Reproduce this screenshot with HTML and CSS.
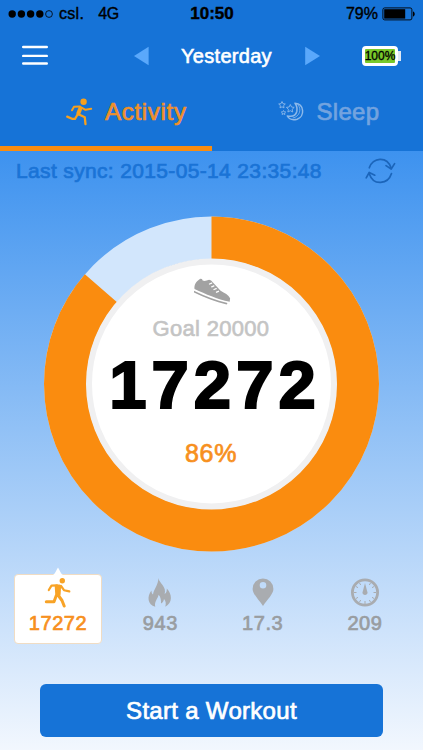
FILE: index.html
```
<!DOCTYPE html>
<html lang="en">
<head>
  <meta charset="UTF-8" />
  <meta name="viewport" content="width=device-width, initial-scale=1" />
  <title>Activity</title>
  <link rel="stylesheet" href="styles.css">
</head>
<body>

  <div class="screen">
    <header class="header">
      <div class="status-bar">
        <div class="status-left">
          <svg class="signal" width="46" height="10" viewBox="0 0 46 10">
            <circle cx="4.2" cy="5" r="3.7" />
            <circle cx="13.4" cy="5" r="3.7" />
            <circle cx="22.6" cy="5" r="3.7" />
            <circle cx="31.8" cy="5" r="3.7" />
            <circle cx="41" cy="5" r="3.4" fill="none" stroke="#000" stroke-width=".8" />
          </svg>
          <span class="carrier">csl.</span>
          <span class="network">4G</span>
        </div>
        <div class="clock">10:50</div>
        <div class="status-right">
          <span>79%</span>
          <svg width="34" height="14" viewBox="0 0 34 14">
            <rect x=".9" y=".9" width="29" height="12" rx="1.8" fill="none" stroke="#000" stroke-width=".9" />
            <rect x="2.2" y="2.2" width="21" height="9.4" />
            <path d="M31 4.5c2.3.6 2.3 4.4 0 5z" />
          </svg>
        </div>
      </div>

      <div class="nav-bar">
        <svg class="menu" width="28" height="21" viewBox="0 0 28 21" stroke="#fff" stroke-width="2.4" stroke-linecap="round">
          <path d="M2.2 2h23.6M2.2 10.900h23.600M2.200 18.500h23.600" />
        </svg>
        <div class="day-picker">
          <svg width="15" height="20" viewBox="0 0 15 20"><path d="M14.6.8v18.4L0 10z" /></svg>
          <div class="day">Yesterday</div>
          <svg width="15" height="20" viewBox="0 0 15 20"><path d="M.2.8v18.4L15 10z" /></svg>
        </div>
        <div class="band-battery">
          <div class="band-level">100%</div>
        </div>
      </div>

      <div class="tabs">
        <div class="tab active">
          <svg class="tab-icon" width="27" height="28" viewBox="0 0 27 28" fill="none" stroke="#f8a01c" stroke-linecap="round" stroke-linejoin="round">
            <circle cx="17.600" cy="3.800" r="3.200" fill="#f8a01c" stroke="none" />
            <path d="M14.500 10L12.300 15.500" stroke-width="4" />
            <path d="M14 8.500L8 8.800 6 12.300M16 9.800L19.500 11.800 25.200 10.800" stroke-width="2" />
            <path d="M13 16.500L18.800 19.300 19.500 26.200M11.300 17L9 20.800 6 20.800 1.200 18.600" stroke-width="2.300" />
          </svg>
          <span>Activity</span>
        </div>
        <div class="tab">
          <svg class="tab-icon" width="27" height="28" viewBox="0 0 27 28" fill="none" stroke="#8db9ea" stroke-linejoin="round">
            <path d="M17 5.200c9.500.5 10 13.500 2.200 16-4.500 1.200-8.300-.3-9.900-3.200 5 1 8.500-.4 9.500-4.500.6-3.300-.1-6.200-1.800-8.300z" stroke-width="1.500" />
            <path d="M19.500 6.500c4.500 4 2.500 12-4.800 13.600" stroke-width=".8" />
            <path d="M4 3.500l1 2.200 2.300.3-1.700 1.600.4 2.300-2-1.100-2 1.100.4-2.300L.7 6l2.300-.3zM12.300 6.500l1.200 2.500 2.700.4-2 1.900.5 2.700-2.400-1.300-2.400 1.300.5-2.700-2-1.900 2.700-.4zM5.500 12.500l.7 1.300 1.500.2-1.100 1 .3 1.500-1.400-.7-1.400.7.3-1.500-1.100-1 1.500-.2z" stroke-width=".9" />
          </svg>
          <span>Sleep</span>
        </div>
      </div>
    </header>

    <div class="sync">
      <div class="sync-text">Last sync: 2015-05-14 23:35:48</div>
      <svg width="31" height="28" viewBox="0 0 31 28" fill="none" stroke="#1b65ba" stroke-width="1.700" stroke-linecap="round" stroke-linejoin="round">
        <path d="M4.300 10.800C7.500.5 22 -1.500 26 10.800M26.500 16.500C23 27.500 8.500 29 4.500 17.200" />
        <path d="M21 8.600L26.200 12 29.600 6.600M1.200 20.800L4.200 15.500 9.800 18.200" />
      </svg>
    </div>

    <main class="goal">
      <svg class="ring" width="336" height="336" viewBox="0 0 336 336">
        <circle cx="168.500" cy="168" r="146.200" fill="none" stroke="#d2e6fc" stroke-width="42.600" />
        <circle cx="168.500" cy="168" r="146.200" fill="none" stroke="#fa8c0f" stroke-width="42.600" pathLength="100" stroke-dasharray="86.360 100" transform="rotate(-90 168.500 168)" />
        <circle cx="168.500" cy="168" r="122.500" fill="#fff" stroke="#f0f0f1" stroke-width="6" />
      </svg>
      <div class="goal-info">
        <svg class="shoe" width="38" height="27" viewBox="0 0 38 27" fill="#a2a2a2">
          <path d="M1.500 11C1 6 3.500 3.500 7.300.8l1.700.2.6 1.600c2 .7 4 .2 6.500-.8l2 .8 9.500 10.200c4 2.200 8 4.300 9.500 7.400l-.4 3.500C24 21.200 13 16.200 1.500 11z" />
          <path d="M1 12.800C13 18.300 23 22.500 34.500 25l-.8 1.400C22.500 24 12 19.600 1 14.500z" />
          <path d="M16.500 6l2.200-.9M18.700 8.800l2.200-.9M21 11.500l2.200-.9M23.500 14.200l2-.9" fill="none" stroke="#fff" stroke-width="1.300" stroke-linecap="round" />
        </svg>
        <div class="goal-label">Goal 20000</div>
        <div class="steps">17272</div>
        <div class="percent">86%</div>
      </div>
    </main>

    <div class="stats">
      <div class="stat selected">
        <svg class="pointer" width="12" height="9" viewBox="0 0 12 9">
          <path d="M0 8.500C3 8 4.500 2.500 6 .5 7.500 2.500 9 8 12 8.500V9H0z" fill="#fff" />
        </svg>
        <svg width="28" height="32" viewBox="0 0 28 32" fill="none" stroke="#f8a326" stroke-linecap="round" stroke-linejoin="round">
          <circle cx="18.300" cy="3.700" r="2.700" fill="#f8a326" stroke="none" />
          <path d="M12.300 9.200L15.500 9.200 15 17.500 12.800 17z" fill="#f8a326" stroke-width="3.200" />
          <path d="M13 8.300L7.500 8.600 4.800 13M17 9L20 13.200 25.300 14.400" stroke-width="2.200" />
          <path d="M14 18L18 23.500 20.200 29M12.300 18.500L10 24.800H2.300" stroke-width="3" />
        </svg>
        <div class="value">17272</div>
      </div>
      <div class="stat">
        <svg width="28" height="32" viewBox="0 0 28 32" fill="#a9acb0">
          <path d="M12.300 1C13 5 17.500 7.500 18.800 12.500c.3 1.500.3 3-.2 4.500 2-1 2.300-3.500 2.200-5.500 5.500 6 6 14-1.500 18.300 1-3.300.4-5.800-1.300-7.700-.4 2.500-1.200 3.500-3 4.500.2-3.700-.3-6.500-2.400-8.800-.5 3.500-4.700 7-3.300 12C1.500 27.500.7 19.500 5.500 13.500c0 2 .3 3 1.500 4C7.500 12.500 12.500 8 12.300 1z" />
        </svg>
        <div class="value">943</div>
      </div>
      <div class="stat">
        <svg width="28" height="32" viewBox="0 0 28 32" fill="#a9acb0">
          <path fill-rule="evenodd" d="M14 1.500A10.400 10.400 0 0 1 24.400 12c0 5-6 10.500-10.400 17C9.600 22.500 3.600 17 3.600 12A10.400 10.400 0 0 1 14 1.500zm0 3.500a3.300 3.300 0 1 0 0 6.600A3.300 3.300 0 0 0 14 5z" />
        </svg>
        <div class="value">17.3</div>
      </div>
      <div class="stat">
        <svg width="28" height="32" viewBox="0 0 28 32" fill="none" stroke="#a9acb0">
          <circle cx="14" cy="15.500" r="12.600" stroke-width="2.800" />
          <path d="M14 24v3M3 15.500h2.500M22.500 15.500H25M5 9.500l2 1.200M23 9.500l-2 1.200M5 21.500l2-1.200M23 21.500l-2-1.200M8.500 25l1.200-2M19.500 25l-1.200-2M8.500 6l1.200 2M19.500 6l-1.200 2" stroke-width="1" />
          <path d="M14 6l2.500 9.500c.4 3.200-5.400 3.200-5 0z" fill="#a9acb0" stroke="none" />
        </svg>
        <div class="value">209</div>
      </div>
    </div>

    <button class="workout">Start a Workout</button>
  </div>

</body>
</html>
```
FILE: styles.css
```
body {
  margin: 0;
  font-family: "Liberation Sans", Arial, sans-serif;
  background: #eff6fe;
}
.screen {
  width: 423px;
  height: 750px;
  overflow: hidden;
  display: flex;
  flex-direction: column;
  background: linear-gradient(#3d92ef 150px, #f2f7fe 750px);
}
svg {
  display: block;
  flex-shrink: 0;
  overflow: visible;
}

/* header */
.header {
  height: 151px;
  background: #1673d7;
}
.status-bar {
  height: 28px;
  padding: 0 7px 0 8px;
  display: grid;
  grid-template-columns: 1fr auto 1fr;
  align-items: center;
  font-size: 16px;
  -webkit-text-stroke: 0.4px #000;
}
.status-left, .status-right {
  display: flex;
  align-items: center;
}
.carrier {
  margin-left: 5px;
  letter-spacing: 0.3px;
}
.network {
  margin-left: 14px;
  letter-spacing: -0.4px;
}
.clock {
  font-weight: bold;
  font-size: 17px;
}
.status-right {
  justify-content: flex-end;
  gap: 4px;
}
.nav-bar {
  height: 55px;
  padding: 0 21px;
  display: flex;
  align-items: center;
}
.day-picker {
  display: flex;
  align-items: center;
  gap: 32px;
  margin-left: 85px;
}
.day-picker svg {
  fill: #5aa8fb;
}
.day {
  width: 92px;
  padding-top: 2px;
  font-size: 20px;
  letter-spacing: 0.3px;
  color: #fff;
  -webkit-text-stroke: 0.6px #fff;
  white-space: nowrap;
}
.band-battery {
  width: 36px;
  height: 20px;
  box-sizing: border-box;
  border: 3px solid #fff;
  border-radius: 4px;
  background: #79c92b;
  position: relative;
  margin-left: auto;
  margin-right: 4px;
}
.band-battery::after {
  content: "";
  position: absolute;
  left: 33px;
  top: 2px;
  width: 3px;
  height: 10px;
  background: #dfe9f5;
}
.band-level {
  margin: 0 -3px;
  font-size: 12px;
  line-height: 14px;
  text-align: center;
  -webkit-text-stroke: 0.3px #000;
}
.tabs {
  height: 68px;
  display: flex;
}
.tab {
  flex: 1;
  box-sizing: border-box;
  padding: 0 0 10px 66px;
  display: flex;
  align-items: center;
  gap: 12px;
  font-size: 24px;
  letter-spacing: 0.3px;
  color: #73a3df;
  -webkit-text-stroke: 0.7px #73a3df;
}
.tab.active {
  color: #f0902a;
  letter-spacing: 0.7px;
  -webkit-text-stroke: 0.7px #f0902a;
  border-bottom: 5px solid #fa8c0f;
  padding-bottom: 5px;
}

/* last sync line */
.sync {
  height: 40px;
  padding: 0 27px 0 16px;
  display: flex;
  align-items: center;
  justify-content: space-between;
}
.sync-text {
  font-size: 21px;
  letter-spacing: 0.35px;
  color: #1a73d6;
  -webkit-text-stroke: 0.7px #1a73d6;
  white-space: nowrap;
}

/* goal ring */
.goal {
  width: 422px;
  height: 336px;
  margin-top: 25px;
  display: grid;
  justify-items: center;
}
.ring, .goal-info {
  grid-area: 1 / 1;
}
.goal-info {
  position: relative;
  display: flex;
  flex-direction: column;
  align-items: center;
  padding-top: 62px;
  box-sizing: border-box;
}
.shoe {
  margin-left: 2px;
}
.goal-label {
  margin-top: 11px;
  font-size: 22px;
  line-height: 26px;
  letter-spacing: 0.3px;
  color: #c4c4c4;
  -webkit-text-stroke: 0.6px #c4c4c4;
}
.steps {
  margin: 10px 0 0 8px;
  font-size: 67px;
  line-height: 66px;
  font-weight: bold;
  letter-spacing: 5px;
  -webkit-text-stroke: 2.2px #000;
}
.percent {
  margin-top: 21px;
  font-size: 25px;
  line-height: 28px;
  letter-spacing: 0.7px;
  color: #f7901e;
  -webkit-text-stroke: 0.7px #f7901e;
}

/* stats row */
.stats {
  margin: 22px 14px 0;
  height: 70px;
  display: grid;
  grid-template-columns: 88px 88px 88px 88px;
  justify-content: space-between;
}
.stat {
  box-sizing: border-box;
  border: 1px solid transparent;
  border-radius: 4px;
  padding-top: 2px;
  display: flex;
  flex-direction: column;
  align-items: center;
  position: relative;
  color: #999da1;
}
.stat.selected {
  background: #fff;
  border-color: #f0dcc3;
  color: #f7901e;
}
.pointer {
  position: absolute;
  left: 37px;
  top: -8px;
}
.value {
  margin-top: 3px;
  font-size: 20px;
  line-height: 23px;
  letter-spacing: 0.6px;
  -webkit-text-stroke: 0.7px currentColor;
}

.workout {
  width: 343px;
  height: 53px;
  margin: 40px 0 0 40px;
  padding: 0;
  border: none;
  border-radius: 6px;
  background: #1673d7;
  color: #fff;
  font-family: inherit;
  font-size: 24px;
  letter-spacing: 0.3px;
  -webkit-text-stroke: 0.7px #fff;
}
```
